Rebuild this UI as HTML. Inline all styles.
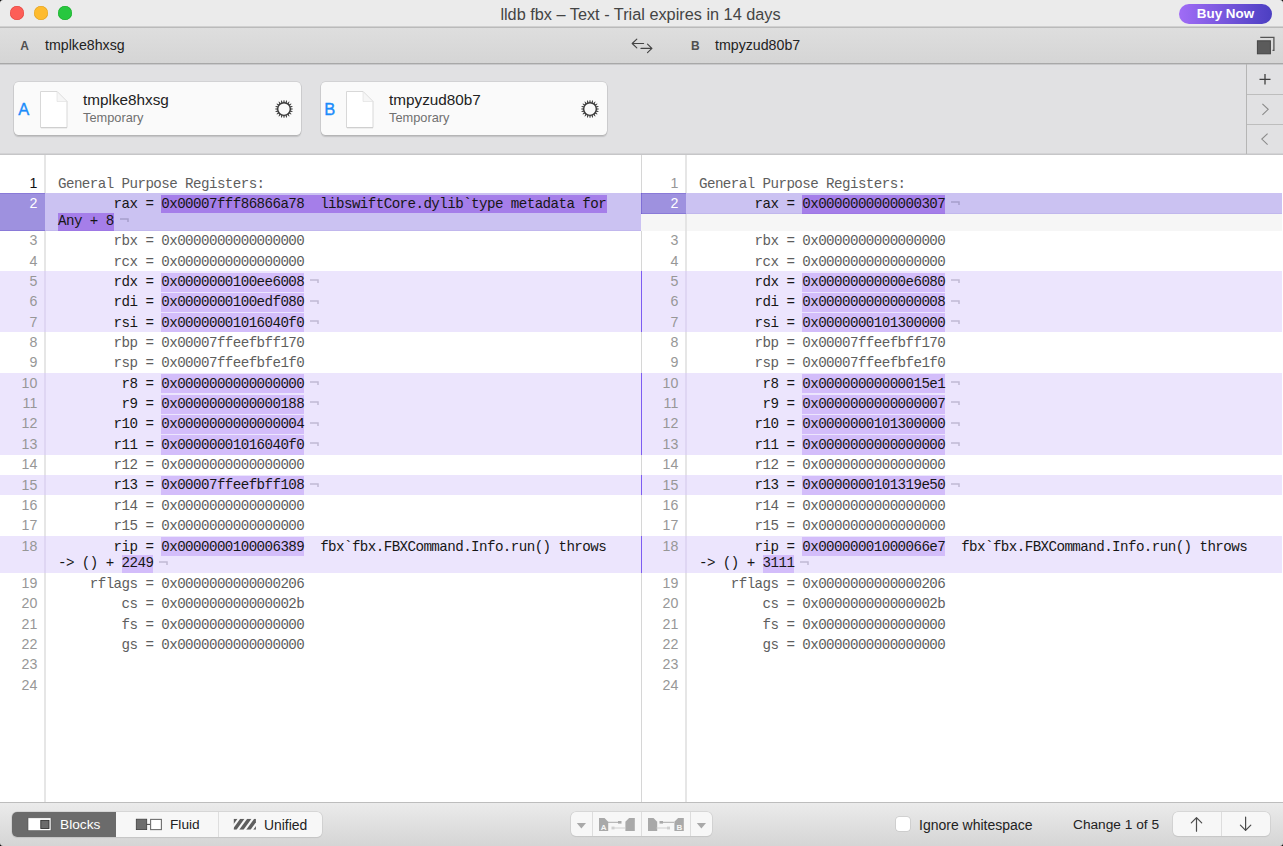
<!DOCTYPE html>
<html><head><meta charset="utf-8">
<style>
html,body{margin:0;padding:0;width:1283px;height:846px;overflow:hidden;background:#fff;font-family:"Liberation Sans",sans-serif;}
.a{position:absolute;}
.t{position:absolute;white-space:pre;font-family:"Liberation Mono",monospace;font-size:14.200px;letter-spacing:-0.570px;line-height:20px;height:20px;}
.n{position:absolute;text-align:right;font-family:"Liberation Sans",sans-serif;font-size:14.2px;line-height:20px;height:20px;}
.nl{color:#c8c8c8;}
.s{position:absolute;white-space:pre;line-height:20px;height:20px;}
</style></head><body>
<!-- title bar -->
<div class="a" style="left:0;top:0;width:1283px;height:26px;background:#ebebeb"></div><div class="a" style="left:0;top:26px;width:1283px;height:1px;background:#d0d0d0"></div><div class="a" style="left:0;top:27px;width:1283px;height:1px;background:#bababa"></div>
<div class="a" style="left:10px;top:6px;width:14px;height:14px;border-radius:50%;background:#fd5e57;box-shadow:inset 0 0 0 0.5px #e0443e"></div>
<div class="a" style="left:34px;top:6px;width:14px;height:14px;border-radius:50%;background:#febb2e;box-shadow:inset 0 0 0 0.5px #dea123"></div>
<div class="a" style="left:58px;top:6px;width:14px;height:14px;border-radius:50%;background:#27c73f;box-shadow:inset 0 0 0 0.5px #1aab29"></div>
<div class="s" style="left:-1px;width:1283px;text-align:center;top:3.6px;font-size:16.3px;color:#444">lldb fbx – Text - Trial expires in 14 days</div>
<div class="a" style="left:1179px;top:4px;width:93px;height:20px;border-radius:10px;background:linear-gradient(90deg,#a06cf6,#4c3fc2)"></div>
<div class="s" style="left:1179px;width:93px;text-align:center;top:4px;font-size:13.4px;font-weight:bold;color:#fff">Buy Now</div>
<!-- toolbar -->
<div class="a" style="left:0;top:28px;width:1283px;height:35px;background:linear-gradient(#dedede,#d5d5d5)"></div><div class="a" style="left:0;top:63px;width:1283px;height:1px;background:#a8a8a8"></div>
<div class="s" style="left:20.3px;top:35.5px;font-size:12px;font-weight:bold;color:#505050">A</div>
<div class="s" style="left:45px;top:35px;font-size:14.2px;color:#222">tmplke8hxsg</div>
<div class="s" style="left:691px;top:35.5px;font-size:12px;font-weight:bold;color:#505050">B</div>
<div class="s" style="left:715px;top:35px;font-size:14.2px;color:#222">tmpyzud80b7</div>
<!-- cards area -->
<div class="a" style="left:0;top:64px;width:1283px;height:89px;background:#e1e1e3"></div><div class="a" style="left:0;top:64px;width:1283px;height:1px;background:#c9c9cb"></div><div class="a" style="left:0;top:153px;width:1283px;height:1px;background:#d3d3d5"></div><div class="a" style="left:0;top:154px;width:1283px;height:1px;background:#c6c6c8"></div>
<div class="a" style="left:14px;top:82px;width:287px;height:52.5px;border-radius:4.5px;background:#fafafa;box-shadow:0 0 0.6px 0.6px rgba(0,0,0,.13),0 1.2px 1.2px rgba(0,0,0,.14)"></div>
<div class="a" style="left:321px;top:82px;width:286px;height:52.5px;border-radius:4.5px;background:#fafafa;box-shadow:0 0 0.6px 0.6px rgba(0,0,0,.13),0 1.2px 1.2px rgba(0,0,0,.14)"></div>
<div class="s" style="left:18.3px;top:99px;font-size:16.5px;color:#1b8cfb;-webkit-text-stroke:0.35px #1b8cfb">A</div>
<div class="s" style="left:324.3px;top:99px;font-size:16.5px;color:#1b8cfb;-webkit-text-stroke:0.35px #1b8cfb">B</div>
<div class="s" style="left:83px;top:90px;font-size:15.3px;color:#222">tmplke8hxsg</div>
<div class="s" style="left:83px;top:108px;font-size:12.8px;color:#707070">Temporary</div>
<div class="s" style="left:389px;top:90px;font-size:15.3px;color:#222">tmpyzud80b7</div>
<div class="s" style="left:389px;top:108px;font-size:12.8px;color:#707070">Temporary</div>
<!-- right buttons panel -->
<div class="a" style="left:1246px;top:64px;width:1px;height:90px;background:#b5b5b5"></div>
<div class="a" style="left:1247px;top:94px;width:36px;height:1px;background:#bdbdbd"></div>
<div class="a" style="left:1247px;top:124px;width:36px;height:1px;background:#bdbdbd"></div>
<!-- code area -->
<div class="a" style="left:0;top:155px;width:1283px;height:647px;background:#fff"></div>
<div class="a" style="left:44px;top:155px;width:2px;height:647px;background:#e6e6e6"></div>
<div class="a" style="left:641px;top:155px;width:1px;height:647px;background:#d6d6d6"></div>
<div class="a" style="left:685px;top:155px;width:2px;height:647px;background:#e6e6e6"></div>
<div class="a" style="left:0px;top:193.36px;width:45px;height:37.26px;background:#9e91df"></div>
<div class="a" style="left:45px;top:193.36px;width:596px;height:37.26px;background:#cbc2f2"></div>
<div class="a" style="left:0px;top:271.34px;width:641px;height:61.08px;background:#ece5fd"></div>
<div class="a" style="left:0px;top:373.14px;width:641px;height:81.44px;background:#ece5fd"></div>
<div class="a" style="left:0px;top:474.94px;width:641px;height:20.36px;background:#ece5fd"></div>
<div class="a" style="left:0px;top:536.02px;width:641px;height:37.26px;background:#ece5fd"></div>
<div class="a" style="left:161.35px;top:194.56px;width:445.20px;height:18.70px;background:#a57ee9"></div>
<div class="a" style="left:58.00px;top:212.76px;width:55.65px;height:17.86px;background:#a57ee9"></div>
<div class="a" style="left:161.35px;top:272.54px;width:143.10px;height:19.16px;background:#d3bdfa"></div>
<div class="a" style="left:161.35px;top:292.90px;width:143.10px;height:19.16px;background:#d3bdfa"></div>
<div class="a" style="left:161.35px;top:313.26px;width:143.10px;height:19.16px;background:#d3bdfa"></div>
<div class="a" style="left:161.35px;top:374.34px;width:143.10px;height:19.16px;background:#d3bdfa"></div>
<div class="a" style="left:161.35px;top:394.70px;width:143.10px;height:19.16px;background:#d3bdfa"></div>
<div class="a" style="left:161.35px;top:415.06px;width:143.10px;height:19.16px;background:#d3bdfa"></div>
<div class="a" style="left:161.35px;top:435.42px;width:143.10px;height:19.16px;background:#d3bdfa"></div>
<div class="a" style="left:161.35px;top:476.14px;width:143.10px;height:19.16px;background:#d3bdfa"></div>
<div class="a" style="left:161.35px;top:537.22px;width:143.10px;height:18.70px;background:#d3bdfa"></div>
<div class="a" style="left:121.60px;top:555.42px;width:31.80px;height:17.86px;background:#d3bdfa"></div>
<div class="t" style="left:58.0px;top:173.52px;color:#5e5e5e">General Purpose Registers:</div>
<div class="n" style="left:0px;width:37.3px;top:172.58px;color:#111111">1</div>
<div class="t" style="left:58.0px;top:193.88px;color:#161616">       rax = 0x00007fff86866a78  libswiftCore.dylib`type metadata for</div>
<svg class="a" style="left:119.50px;top:217.96px" width="10" height="5" viewBox="0 0 10 5"><path d="M0,0.9 H8 V4" fill="none" stroke="rgba(40,30,70,0.22)" stroke-width="1.5"/></svg>
<div class="t" style="left:58.0px;top:210.68px;color:#161616">Any + 8</div>
<div class="n" style="left:0px;width:37.3px;top:192.94px;color:#ffffff">2</div>
<div class="t" style="left:58.0px;top:231.14px;color:#5e5e5e">       rbx = 0x0000000000000000</div>
<div class="n" style="left:0px;width:37.3px;top:230.20px;color:#979797">3</div>
<div class="t" style="left:58.0px;top:251.50px;color:#5e5e5e">       rcx = 0x0000000000000000</div>
<div class="n" style="left:0px;width:37.3px;top:250.56px;color:#979797">4</div>
<svg class="a" style="left:310.30px;top:279.14px" width="10" height="5" viewBox="0 0 10 5"><path d="M0,0.9 H8 V4" fill="none" stroke="rgba(40,30,70,0.22)" stroke-width="1.5"/></svg>
<div class="t" style="left:58.0px;top:271.86px;color:#161616">       rdx = 0x0000000100ee6008</div>
<div class="n" style="left:0px;width:37.3px;top:270.92px;color:#979797">5</div>
<svg class="a" style="left:310.30px;top:299.50px" width="10" height="5" viewBox="0 0 10 5"><path d="M0,0.9 H8 V4" fill="none" stroke="rgba(40,30,70,0.22)" stroke-width="1.5"/></svg>
<div class="t" style="left:58.0px;top:292.22px;color:#161616">       rdi = 0x0000000100edf080</div>
<div class="n" style="left:0px;width:37.3px;top:291.28px;color:#979797">6</div>
<svg class="a" style="left:310.30px;top:319.86px" width="10" height="5" viewBox="0 0 10 5"><path d="M0,0.9 H8 V4" fill="none" stroke="rgba(40,30,70,0.22)" stroke-width="1.5"/></svg>
<div class="t" style="left:58.0px;top:312.58px;color:#161616">       rsi = 0x00000001016040f0</div>
<div class="n" style="left:0px;width:37.3px;top:311.64px;color:#979797">7</div>
<div class="t" style="left:58.0px;top:332.94px;color:#5e5e5e">       rbp = 0x00007ffeefbff170</div>
<div class="n" style="left:0px;width:37.3px;top:332.00px;color:#979797">8</div>
<div class="t" style="left:58.0px;top:353.30px;color:#5e5e5e">       rsp = 0x00007ffeefbfe1f0</div>
<div class="n" style="left:0px;width:37.3px;top:352.36px;color:#979797">9</div>
<svg class="a" style="left:310.30px;top:380.94px" width="10" height="5" viewBox="0 0 10 5"><path d="M0,0.9 H8 V4" fill="none" stroke="rgba(40,30,70,0.22)" stroke-width="1.5"/></svg>
<div class="t" style="left:58.0px;top:373.66px;color:#161616">        r8 = 0x0000000000000000</div>
<div class="n" style="left:0px;width:37.3px;top:372.72px;color:#979797">10</div>
<svg class="a" style="left:310.30px;top:401.30px" width="10" height="5" viewBox="0 0 10 5"><path d="M0,0.9 H8 V4" fill="none" stroke="rgba(40,30,70,0.22)" stroke-width="1.5"/></svg>
<div class="t" style="left:58.0px;top:394.02px;color:#161616">        r9 = 0x0000000000000188</div>
<div class="n" style="left:0px;width:37.3px;top:393.08px;color:#979797">11</div>
<svg class="a" style="left:310.30px;top:421.66px" width="10" height="5" viewBox="0 0 10 5"><path d="M0,0.9 H8 V4" fill="none" stroke="rgba(40,30,70,0.22)" stroke-width="1.5"/></svg>
<div class="t" style="left:58.0px;top:414.38px;color:#161616">       r10 = 0x0000000000000004</div>
<div class="n" style="left:0px;width:37.3px;top:413.44px;color:#979797">12</div>
<svg class="a" style="left:310.30px;top:442.02px" width="10" height="5" viewBox="0 0 10 5"><path d="M0,0.9 H8 V4" fill="none" stroke="rgba(40,30,70,0.22)" stroke-width="1.5"/></svg>
<div class="t" style="left:58.0px;top:434.74px;color:#161616">       r11 = 0x00000001016040f0</div>
<div class="n" style="left:0px;width:37.3px;top:433.80px;color:#979797">13</div>
<div class="t" style="left:58.0px;top:455.10px;color:#5e5e5e">       r12 = 0x0000000000000000</div>
<div class="n" style="left:0px;width:37.3px;top:454.16px;color:#979797">14</div>
<svg class="a" style="left:310.30px;top:482.74px" width="10" height="5" viewBox="0 0 10 5"><path d="M0,0.9 H8 V4" fill="none" stroke="rgba(40,30,70,0.22)" stroke-width="1.5"/></svg>
<div class="t" style="left:58.0px;top:475.46px;color:#161616">       r13 = 0x00007ffeefbff108</div>
<div class="n" style="left:0px;width:37.3px;top:474.52px;color:#979797">15</div>
<div class="t" style="left:58.0px;top:495.82px;color:#5e5e5e">       r14 = 0x0000000000000000</div>
<div class="n" style="left:0px;width:37.3px;top:494.88px;color:#979797">16</div>
<div class="t" style="left:58.0px;top:516.18px;color:#5e5e5e">       r15 = 0x0000000000000000</div>
<div class="n" style="left:0px;width:37.3px;top:515.24px;color:#979797">17</div>
<div class="t" style="left:58.0px;top:536.54px;color:#161616">       rip = 0x0000000100006389  fbx`fbx.FBXCommand.Info.run() throws</div>
<svg class="a" style="left:159.25px;top:560.62px" width="10" height="5" viewBox="0 0 10 5"><path d="M0,0.9 H8 V4" fill="none" stroke="rgba(40,30,70,0.22)" stroke-width="1.5"/></svg>
<div class="t" style="left:58.0px;top:553.34px;color:#161616">-&gt; () + 2249</div>
<div class="n" style="left:0px;width:37.3px;top:535.60px;color:#979797">18</div>
<div class="t" style="left:58.0px;top:573.80px;color:#5e5e5e">    rflags = 0x0000000000000206</div>
<div class="n" style="left:0px;width:37.3px;top:572.86px;color:#979797">19</div>
<div class="t" style="left:58.0px;top:594.16px;color:#5e5e5e">        cs = 0x000000000000002b</div>
<div class="n" style="left:0px;width:37.3px;top:593.22px;color:#979797">20</div>
<div class="t" style="left:58.0px;top:614.52px;color:#5e5e5e">        fs = 0x0000000000000000</div>
<div class="n" style="left:0px;width:37.3px;top:613.58px;color:#979797">21</div>
<div class="t" style="left:58.0px;top:634.88px;color:#5e5e5e">        gs = 0x0000000000000000</div>
<div class="n" style="left:0px;width:37.3px;top:633.94px;color:#979797">22</div>
<div class="t" style="left:58.0px;top:655.24px;color:#5e5e5e"></div>
<div class="n" style="left:0px;width:37.3px;top:654.30px;color:#979797">23</div>
<div class="t" style="left:58.0px;top:675.60px;color:#5e5e5e"></div>
<div class="n" style="left:0px;width:37.3px;top:674.66px;color:#979797">24</div>
<div class="a" style="left:641px;top:193.36px;width:45px;height:20.36px;background:#9e91df"></div>
<div class="a" style="left:686px;top:193.36px;width:596px;height:20.36px;background:#cbc2f2"></div>
<div class="a" style="left:641px;top:213.72px;width:641px;height:16.90px;background:#f6f6f6"></div>
<div class="a" style="left:641px;top:271.34px;width:641px;height:61.08px;background:#ece5fd"></div>
<div class="a" style="left:641px;top:373.14px;width:641px;height:81.44px;background:#ece5fd"></div>
<div class="a" style="left:641px;top:474.94px;width:641px;height:20.36px;background:#ece5fd"></div>
<div class="a" style="left:641px;top:536.02px;width:641px;height:37.26px;background:#ece5fd"></div>
<div class="a" style="left:802.35px;top:194.56px;width:143.10px;height:19.16px;background:#a57ee9"></div>
<div class="a" style="left:802.35px;top:272.54px;width:143.10px;height:19.16px;background:#d3bdfa"></div>
<div class="a" style="left:802.35px;top:292.90px;width:143.10px;height:19.16px;background:#d3bdfa"></div>
<div class="a" style="left:802.35px;top:313.26px;width:143.10px;height:19.16px;background:#d3bdfa"></div>
<div class="a" style="left:802.35px;top:374.34px;width:143.10px;height:19.16px;background:#d3bdfa"></div>
<div class="a" style="left:802.35px;top:394.70px;width:143.10px;height:19.16px;background:#d3bdfa"></div>
<div class="a" style="left:802.35px;top:415.06px;width:143.10px;height:19.16px;background:#d3bdfa"></div>
<div class="a" style="left:802.35px;top:435.42px;width:143.10px;height:19.16px;background:#d3bdfa"></div>
<div class="a" style="left:802.35px;top:476.14px;width:143.10px;height:19.16px;background:#d3bdfa"></div>
<div class="a" style="left:802.35px;top:537.22px;width:143.10px;height:18.70px;background:#d3bdfa"></div>
<div class="a" style="left:762.60px;top:555.42px;width:31.80px;height:17.86px;background:#d3bdfa"></div>
<div class="t" style="left:699.0px;top:173.52px;color:#5e5e5e">General Purpose Registers:</div>
<div class="n" style="left:641px;width:37.3px;top:172.58px;color:#979797">1</div>
<svg class="a" style="left:951.30px;top:201.16px" width="10" height="5" viewBox="0 0 10 5"><path d="M0,0.9 H8 V4" fill="none" stroke="rgba(40,30,70,0.22)" stroke-width="1.5"/></svg>
<div class="t" style="left:699.0px;top:193.88px;color:#161616">       rax = 0x0000000000000307</div>
<div class="n" style="left:641px;width:37.3px;top:192.94px;color:#ffffff">2</div>
<div class="t" style="left:699.0px;top:231.14px;color:#5e5e5e">       rbx = 0x0000000000000000</div>
<div class="n" style="left:641px;width:37.3px;top:230.20px;color:#979797">3</div>
<div class="t" style="left:699.0px;top:251.50px;color:#5e5e5e">       rcx = 0x0000000000000000</div>
<div class="n" style="left:641px;width:37.3px;top:250.56px;color:#979797">4</div>
<svg class="a" style="left:951.30px;top:279.14px" width="10" height="5" viewBox="0 0 10 5"><path d="M0,0.9 H8 V4" fill="none" stroke="rgba(40,30,70,0.22)" stroke-width="1.5"/></svg>
<div class="t" style="left:699.0px;top:271.86px;color:#161616">       rdx = 0x00000000000e6080</div>
<div class="n" style="left:641px;width:37.3px;top:270.92px;color:#979797">5</div>
<svg class="a" style="left:951.30px;top:299.50px" width="10" height="5" viewBox="0 0 10 5"><path d="M0,0.9 H8 V4" fill="none" stroke="rgba(40,30,70,0.22)" stroke-width="1.5"/></svg>
<div class="t" style="left:699.0px;top:292.22px;color:#161616">       rdi = 0x0000000000000008</div>
<div class="n" style="left:641px;width:37.3px;top:291.28px;color:#979797">6</div>
<svg class="a" style="left:951.30px;top:319.86px" width="10" height="5" viewBox="0 0 10 5"><path d="M0,0.9 H8 V4" fill="none" stroke="rgba(40,30,70,0.22)" stroke-width="1.5"/></svg>
<div class="t" style="left:699.0px;top:312.58px;color:#161616">       rsi = 0x0000000101300000</div>
<div class="n" style="left:641px;width:37.3px;top:311.64px;color:#979797">7</div>
<div class="t" style="left:699.0px;top:332.94px;color:#5e5e5e">       rbp = 0x00007ffeefbff170</div>
<div class="n" style="left:641px;width:37.3px;top:332.00px;color:#979797">8</div>
<div class="t" style="left:699.0px;top:353.30px;color:#5e5e5e">       rsp = 0x00007ffeefbfe1f0</div>
<div class="n" style="left:641px;width:37.3px;top:352.36px;color:#979797">9</div>
<svg class="a" style="left:951.30px;top:380.94px" width="10" height="5" viewBox="0 0 10 5"><path d="M0,0.9 H8 V4" fill="none" stroke="rgba(40,30,70,0.22)" stroke-width="1.5"/></svg>
<div class="t" style="left:699.0px;top:373.66px;color:#161616">        r8 = 0x00000000000015e1</div>
<div class="n" style="left:641px;width:37.3px;top:372.72px;color:#979797">10</div>
<svg class="a" style="left:951.30px;top:401.30px" width="10" height="5" viewBox="0 0 10 5"><path d="M0,0.9 H8 V4" fill="none" stroke="rgba(40,30,70,0.22)" stroke-width="1.5"/></svg>
<div class="t" style="left:699.0px;top:394.02px;color:#161616">        r9 = 0x0000000000000007</div>
<div class="n" style="left:641px;width:37.3px;top:393.08px;color:#979797">11</div>
<svg class="a" style="left:951.30px;top:421.66px" width="10" height="5" viewBox="0 0 10 5"><path d="M0,0.9 H8 V4" fill="none" stroke="rgba(40,30,70,0.22)" stroke-width="1.5"/></svg>
<div class="t" style="left:699.0px;top:414.38px;color:#161616">       r10 = 0x0000000101300000</div>
<div class="n" style="left:641px;width:37.3px;top:413.44px;color:#979797">12</div>
<svg class="a" style="left:951.30px;top:442.02px" width="10" height="5" viewBox="0 0 10 5"><path d="M0,0.9 H8 V4" fill="none" stroke="rgba(40,30,70,0.22)" stroke-width="1.5"/></svg>
<div class="t" style="left:699.0px;top:434.74px;color:#161616">       r11 = 0x0000000000000000</div>
<div class="n" style="left:641px;width:37.3px;top:433.80px;color:#979797">13</div>
<div class="t" style="left:699.0px;top:455.10px;color:#5e5e5e">       r12 = 0x0000000000000000</div>
<div class="n" style="left:641px;width:37.3px;top:454.16px;color:#979797">14</div>
<svg class="a" style="left:951.30px;top:482.74px" width="10" height="5" viewBox="0 0 10 5"><path d="M0,0.9 H8 V4" fill="none" stroke="rgba(40,30,70,0.22)" stroke-width="1.5"/></svg>
<div class="t" style="left:699.0px;top:475.46px;color:#161616">       r13 = 0x0000000101319e50</div>
<div class="n" style="left:641px;width:37.3px;top:474.52px;color:#979797">15</div>
<div class="t" style="left:699.0px;top:495.82px;color:#5e5e5e">       r14 = 0x0000000000000000</div>
<div class="n" style="left:641px;width:37.3px;top:494.88px;color:#979797">16</div>
<div class="t" style="left:699.0px;top:516.18px;color:#5e5e5e">       r15 = 0x0000000000000000</div>
<div class="n" style="left:641px;width:37.3px;top:515.24px;color:#979797">17</div>
<div class="t" style="left:699.0px;top:536.54px;color:#161616">       rip = 0x00000001000066e7  fbx`fbx.FBXCommand.Info.run() throws</div>
<svg class="a" style="left:800.25px;top:560.62px" width="10" height="5" viewBox="0 0 10 5"><path d="M0,0.9 H8 V4" fill="none" stroke="rgba(40,30,70,0.22)" stroke-width="1.5"/></svg>
<div class="t" style="left:699.0px;top:553.34px;color:#161616">-&gt; () + 3111</div>
<div class="n" style="left:641px;width:37.3px;top:535.60px;color:#979797">18</div>
<div class="t" style="left:699.0px;top:573.80px;color:#5e5e5e">    rflags = 0x0000000000000206</div>
<div class="n" style="left:641px;width:37.3px;top:572.86px;color:#979797">19</div>
<div class="t" style="left:699.0px;top:594.16px;color:#5e5e5e">        cs = 0x000000000000002b</div>
<div class="n" style="left:641px;width:37.3px;top:593.22px;color:#979797">20</div>
<div class="t" style="left:699.0px;top:614.52px;color:#5e5e5e">        fs = 0x0000000000000000</div>
<div class="n" style="left:641px;width:37.3px;top:613.58px;color:#979797">21</div>
<div class="t" style="left:699.0px;top:634.88px;color:#5e5e5e">        gs = 0x0000000000000000</div>
<div class="n" style="left:641px;width:37.3px;top:633.94px;color:#979797">22</div>
<div class="t" style="left:699.0px;top:655.24px;color:#5e5e5e"></div>
<div class="n" style="left:641px;width:37.3px;top:654.30px;color:#979797">23</div>
<div class="t" style="left:699.0px;top:675.60px;color:#5e5e5e"></div>
<div class="n" style="left:641px;width:37.3px;top:674.66px;color:#979797">24</div>
<div class="a" style="left:641px;top:271.34px;width:1px;height:61.08px;background:#7d5cf2"></div>
<div class="a" style="left:641px;top:373.14px;width:1px;height:81.44px;background:#7d5cf2"></div>
<div class="a" style="left:641px;top:474.94px;width:1px;height:20.36px;background:#7d5cf2"></div>
<div class="a" style="left:641px;top:536.02px;width:1px;height:37.26px;background:#7d5cf2"></div>
<div class="a" style="left:44px;top:271.34px;width:2px;height:61.08px;background:rgba(60,30,120,0.07)"></div>
<div class="a" style="left:685px;top:271.34px;width:2px;height:61.08px;background:rgba(60,30,120,0.07)"></div>
<div class="a" style="left:44px;top:373.14px;width:2px;height:81.44px;background:rgba(60,30,120,0.07)"></div>
<div class="a" style="left:685px;top:373.14px;width:2px;height:81.44px;background:rgba(60,30,120,0.07)"></div>
<div class="a" style="left:44px;top:474.94px;width:2px;height:20.36px;background:rgba(60,30,120,0.07)"></div>
<div class="a" style="left:685px;top:474.94px;width:2px;height:20.36px;background:rgba(60,30,120,0.07)"></div>
<div class="a" style="left:44px;top:536.02px;width:2px;height:37.26px;background:rgba(60,30,120,0.07)"></div>
<div class="a" style="left:685px;top:536.02px;width:2px;height:37.26px;background:rgba(60,30,120,0.07)"></div>
<div class="a" style="left:641px;top:193.36px;width:1px;height:20.36px;background:#7f6fd6"></div>
<div class="a" style="left:685px;top:213.72px;width:2px;height:16.90px;background:rgba(0,0,0,0.07)"></div>
<div class="a" style="left:0px;top:193.36px;width:45px;height:1px;background:rgba(70,40,190,0.22)"></div>
<div class="a" style="left:0px;top:229.62px;width:45px;height:1px;background:rgba(70,40,190,0.22)"></div>
<div class="a" style="left:641px;top:193.36px;width:45px;height:1px;background:rgba(70,40,190,0.22)"></div>
<div class="a" style="left:641px;top:212.72px;width:45px;height:1px;background:rgba(70,40,190,0.22)"></div>
<div class="a" style="left:686px;top:212.72px;width:596px;height:1px;background:rgba(70,40,190,0.07)"></div>
<div class="a" style="left:45px;top:229.62px;width:596px;height:1px;background:rgba(70,40,190,0.07)"></div>
<!-- bottom bar -->
<div class="a" style="left:0;top:803px;width:1283px;height:43px;background:linear-gradient(#ebebeb,#d5d5d5)"></div><div class="a" style="left:0;top:802px;width:1283px;height:1px;background:#bdbdbd"></div>
<div class="a" style="left:12px;top:812px;width:310px;height:25px;border-radius:5px;background:#f7f7f7;box-shadow:0 0 0 0.6px #c8c8c8,0 0.6px 1px rgba(0,0,0,.10)"></div>
<div class="a" style="left:12px;top:812px;width:104px;height:25px;border-radius:5px 0 0 5px;background:#6b6b6b"></div>
<div class="a" style="left:218px;top:812px;width:1px;height:25px;background:#dedede"></div>
<div class="s" style="left:60px;top:815px;font-size:13.7px;color:#fff">Blocks</div>
<div class="s" style="left:170px;top:815px;font-size:13.7px;color:#222">Fluid</div>
<div class="s" style="left:264px;top:815px;font-size:13.9px;color:#222">Unified</div>
<div class="a" style="left:571px;top:812px;width:141px;height:24px;border-radius:5px;background:#f7f7f7;box-shadow:0 0 0 0.6px #cacaca,0 0.6px 1px rgba(0,0,0,.10)"></div>
<div class="a" style="left:592px;top:812px;width:1px;height:24px;background:#dddddd"></div>
<div class="a" style="left:641px;top:812px;width:1px;height:24px;background:#dddddd"></div>
<div class="a" style="left:690px;top:812px;width:1px;height:24px;background:#dddddd"></div>
<div class="a" style="left:896px;top:817px;width:14px;height:14px;border-radius:3px;background:#fff;box-shadow:0 0 0 0.5px #bdbdbd"></div>
<div class="s" style="left:919px;top:815px;font-size:14px;color:#222">Ignore whitespace</div>
<div class="s" style="left:1073px;top:815px;font-size:13.7px;color:#222">Change 1 of 5</div>
<div class="a" style="left:1173px;top:812px;width:97px;height:24px;border-radius:5px;background:#f7f7f7;box-shadow:0 0 0 0.6px #cacaca,0 0.6px 1px rgba(0,0,0,.10)"></div>
<div class="a" style="left:1221px;top:812px;width:1px;height:24px;background:#dddddd"></div>
<svg class="a" style="left:38px;top:89px" width="32" height="41" viewBox="-2 -2 32 41"><path d="M0.5,0.5 H17 L27,10.5 V36.5 H0.5 Z" fill="#ffffff" stroke="#d8d8d8" stroke-width="1"/><path d="M17,0.5 V10.5 H27 Z" fill="#f6f6f6" stroke="#dedede" stroke-width="0.6"/><path d="M1,36.8 H27" stroke="#c8c8c8" stroke-width="0.8"/></svg>
<svg class="a" style="left:344px;top:89px" width="32" height="41" viewBox="-2 -2 32 41"><path d="M0.5,0.5 H17 L27,10.5 V36.5 H0.5 Z" fill="#ffffff" stroke="#d8d8d8" stroke-width="1"/><path d="M17,0.5 V10.5 H27 Z" fill="#f6f6f6" stroke="#dedede" stroke-width="0.6"/><path d="M1,36.8 H27" stroke="#c8c8c8" stroke-width="0.8"/></svg>
<svg class="a" style="left:273.9px;top:99.1px" width="20" height="20" viewBox="-10 -10 20 20"><circle r="6.35" fill="none" stroke="#3b3b3b" stroke-width="1.45"/><path d="M-0.8,-6.6 L-0.25,-9 L0.25,-9 L0.8,-6.6 Z" transform="rotate(0)" fill="#3b3b3b"/><path d="M-0.8,-6.6 L-0.25,-9 L0.25,-9 L0.8,-6.6 Z" transform="rotate(18)" fill="#3b3b3b"/><path d="M-0.8,-6.6 L-0.25,-9 L0.25,-9 L0.8,-6.6 Z" transform="rotate(36)" fill="#3b3b3b"/><path d="M-0.8,-6.6 L-0.25,-9 L0.25,-9 L0.8,-6.6 Z" transform="rotate(54)" fill="#3b3b3b"/><path d="M-0.8,-6.6 L-0.25,-9 L0.25,-9 L0.8,-6.6 Z" transform="rotate(72)" fill="#3b3b3b"/><path d="M-0.8,-6.6 L-0.25,-9 L0.25,-9 L0.8,-6.6 Z" transform="rotate(90)" fill="#3b3b3b"/><path d="M-0.8,-6.6 L-0.25,-9 L0.25,-9 L0.8,-6.6 Z" transform="rotate(108)" fill="#3b3b3b"/><path d="M-0.8,-6.6 L-0.25,-9 L0.25,-9 L0.8,-6.6 Z" transform="rotate(126)" fill="#3b3b3b"/><path d="M-0.8,-6.6 L-0.25,-9 L0.25,-9 L0.8,-6.6 Z" transform="rotate(144)" fill="#3b3b3b"/><path d="M-0.8,-6.6 L-0.25,-9 L0.25,-9 L0.8,-6.6 Z" transform="rotate(162)" fill="#3b3b3b"/><path d="M-0.8,-6.6 L-0.25,-9 L0.25,-9 L0.8,-6.6 Z" transform="rotate(180)" fill="#3b3b3b"/><path d="M-0.8,-6.6 L-0.25,-9 L0.25,-9 L0.8,-6.6 Z" transform="rotate(198)" fill="#3b3b3b"/><path d="M-0.8,-6.6 L-0.25,-9 L0.25,-9 L0.8,-6.6 Z" transform="rotate(216)" fill="#3b3b3b"/><path d="M-0.8,-6.6 L-0.25,-9 L0.25,-9 L0.8,-6.6 Z" transform="rotate(234)" fill="#3b3b3b"/><path d="M-0.8,-6.6 L-0.25,-9 L0.25,-9 L0.8,-6.6 Z" transform="rotate(252)" fill="#3b3b3b"/><path d="M-0.8,-6.6 L-0.25,-9 L0.25,-9 L0.8,-6.6 Z" transform="rotate(270)" fill="#3b3b3b"/><path d="M-0.8,-6.6 L-0.25,-9 L0.25,-9 L0.8,-6.6 Z" transform="rotate(288)" fill="#3b3b3b"/><path d="M-0.8,-6.6 L-0.25,-9 L0.25,-9 L0.8,-6.6 Z" transform="rotate(306)" fill="#3b3b3b"/><path d="M-0.8,-6.6 L-0.25,-9 L0.25,-9 L0.8,-6.6 Z" transform="rotate(324)" fill="#3b3b3b"/><path d="M-0.8,-6.6 L-0.25,-9 L0.25,-9 L0.8,-6.6 Z" transform="rotate(342)" fill="#3b3b3b"/></svg>
<svg class="a" style="left:579.9px;top:99.1px" width="20" height="20" viewBox="-10 -10 20 20"><circle r="6.35" fill="none" stroke="#3b3b3b" stroke-width="1.45"/><path d="M-0.8,-6.6 L-0.25,-9 L0.25,-9 L0.8,-6.6 Z" transform="rotate(0)" fill="#3b3b3b"/><path d="M-0.8,-6.6 L-0.25,-9 L0.25,-9 L0.8,-6.6 Z" transform="rotate(18)" fill="#3b3b3b"/><path d="M-0.8,-6.6 L-0.25,-9 L0.25,-9 L0.8,-6.6 Z" transform="rotate(36)" fill="#3b3b3b"/><path d="M-0.8,-6.6 L-0.25,-9 L0.25,-9 L0.8,-6.6 Z" transform="rotate(54)" fill="#3b3b3b"/><path d="M-0.8,-6.6 L-0.25,-9 L0.25,-9 L0.8,-6.6 Z" transform="rotate(72)" fill="#3b3b3b"/><path d="M-0.8,-6.6 L-0.25,-9 L0.25,-9 L0.8,-6.6 Z" transform="rotate(90)" fill="#3b3b3b"/><path d="M-0.8,-6.6 L-0.25,-9 L0.25,-9 L0.8,-6.6 Z" transform="rotate(108)" fill="#3b3b3b"/><path d="M-0.8,-6.6 L-0.25,-9 L0.25,-9 L0.8,-6.6 Z" transform="rotate(126)" fill="#3b3b3b"/><path d="M-0.8,-6.6 L-0.25,-9 L0.25,-9 L0.8,-6.6 Z" transform="rotate(144)" fill="#3b3b3b"/><path d="M-0.8,-6.6 L-0.25,-9 L0.25,-9 L0.8,-6.6 Z" transform="rotate(162)" fill="#3b3b3b"/><path d="M-0.8,-6.6 L-0.25,-9 L0.25,-9 L0.8,-6.6 Z" transform="rotate(180)" fill="#3b3b3b"/><path d="M-0.8,-6.6 L-0.25,-9 L0.25,-9 L0.8,-6.6 Z" transform="rotate(198)" fill="#3b3b3b"/><path d="M-0.8,-6.6 L-0.25,-9 L0.25,-9 L0.8,-6.6 Z" transform="rotate(216)" fill="#3b3b3b"/><path d="M-0.8,-6.6 L-0.25,-9 L0.25,-9 L0.8,-6.6 Z" transform="rotate(234)" fill="#3b3b3b"/><path d="M-0.8,-6.6 L-0.25,-9 L0.25,-9 L0.8,-6.6 Z" transform="rotate(252)" fill="#3b3b3b"/><path d="M-0.8,-6.6 L-0.25,-9 L0.25,-9 L0.8,-6.6 Z" transform="rotate(270)" fill="#3b3b3b"/><path d="M-0.8,-6.6 L-0.25,-9 L0.25,-9 L0.8,-6.6 Z" transform="rotate(288)" fill="#3b3b3b"/><path d="M-0.8,-6.6 L-0.25,-9 L0.25,-9 L0.8,-6.6 Z" transform="rotate(306)" fill="#3b3b3b"/><path d="M-0.8,-6.6 L-0.25,-9 L0.25,-9 L0.8,-6.6 Z" transform="rotate(324)" fill="#3b3b3b"/><path d="M-0.8,-6.6 L-0.25,-9 L0.25,-9 L0.8,-6.6 Z" transform="rotate(342)" fill="#3b3b3b"/></svg>
<svg class="a" style="left:625px;top:33px" width="35" height="25" viewBox="625 33 35 25" fill="none" stroke="#444" stroke-width="1.15" stroke-linecap="round" stroke-linejoin="round"><path d="M636.8,39.2 L632.2,43.5 L636.8,47.8 M632.2,43.5 H643.6"/><path d="M647.5,44.1 L651.9,48.4 L647.5,52.7 M641,48.4 H651.9"/></svg>
<svg class="a" style="left:1250px;top:30px" width="30" height="30" viewBox="1250 30 30 30"><path d="M1260.9,37.9 V37.3 H1273.9 V50.3 H1272.5" fill="none" stroke="#555" stroke-width="1.3"/><rect x="1257.4" y="40.8" width="13" height="13" fill="#5b5b5b" stroke="#444" stroke-width="1"/></svg>
<svg class="a" style="left:1247px;top:64px" width="36" height="90" viewBox="1247 64 36 90" fill="none" stroke-linecap="butt"><path d="M1259.5,79.3 H1270.5 M1265,74 V84.6" stroke="#3f3f3f" stroke-width="1.3"/><path d="M1262.4,103.8 L1268.2,109.3 L1262.4,114.8" stroke="#8a8a8a" stroke-width="1.1"/><path d="M1267.6,133.6 L1261.8,139.1 L1267.6,144.6" stroke="#8a8a8a" stroke-width="1.1"/></svg>
<svg class="a" style="left:20px;top:810px" width="40" height="30" viewBox="20 810 40 30"><rect x="28" y="817.8" width="23" height="12.9" fill="#fff" stroke="#555" stroke-width="0.6"/><rect x="40.8" y="820.4" width="8.2" height="8.1" fill="#6b6b6b" stroke="#333" stroke-width="0.9"/></svg>
<svg class="a" style="left:130px;top:810px" width="40" height="30" viewBox="130 810 40 30"><rect x="136.3" y="819.2" width="10.4" height="10.4" fill="#6e6e6e" stroke="#3e3e3e" stroke-width="0.8"/><path d="M146.7,824.4 H150.4" stroke="#444" stroke-width="1"/><rect x="150.6" y="819.4" width="10.8" height="10.2" fill="#fff" stroke="#6e6e6e" stroke-width="1.1"/></svg>
<svg class="a" style="left:228px;top:810px" width="34" height="30" viewBox="228 810 34 30"><defs><clipPath id="uc"><rect x="233.8" y="818.8" width="22.1" height="11"/></clipPath></defs><g clip-path="url(#uc)" fill="#5e5e5e"><path d="M233.2,818.8 H237.5 L229.5,829.8 H225.2 Z"/><path d="M240.2,818.8 H244.5 L236.5,829.8 H232.2 Z"/><path d="M247.2,818.8 H251.5 L243.5,829.8 H239.2 Z"/><path d="M254.2,818.8 H258.5 L250.5,829.8 H246.2 Z"/><path d="M261.2,818.8 H265.5 L257.5,829.8 H253.2 Z"/></g></svg>
<svg class="a" style="left:571px;top:812px" width="141" height="25" viewBox="571 812 141 25" fill="#a9a9a9"><path d="M576.8,823 H586 L581.4,828.5 Z"/><path d="M696.8,823 H706 L701.4,828.5 Z"/><path d="M599,818 H604.5 L608.2,821.7 V830.9 H599 Z"/><text x="603.6" y="830" font-family="Liberation Sans" font-weight="bold" font-size="8" fill="#f6f6f6" text-anchor="middle">A</text><path d="M607.5,822.3 H618.5" stroke="#a9a9a9" stroke-width="1"/><rect x="618" y="821" width="3.5" height="2.6"/><path d="M612,828 H625" stroke="#cfcfcf" stroke-width="1"/><rect x="611.5" y="826.6" width="3" height="2.8" fill="#cfcfcf"/><path d="M629.1,818 H634.8 V830.9 H625.4 V821.7 Z"/><path d="M648,818 H653.5 L657.2,821.7 V830.9 H648 Z"/><path d="M656.5,828 H669" stroke="#cfcfcf" stroke-width="1"/><rect x="667" y="826.6" width="3" height="2.8" fill="#cfcfcf"/><path d="M661,822.3 H674" stroke="#a9a9a9" stroke-width="1"/><rect x="659.5" y="821" width="3.5" height="2.6"/><path d="M678.1,818 H683.8 V830.9 H674.4 V821.7 Z"/><text x="679.3" y="830" font-family="Liberation Sans" font-weight="bold" font-size="8" fill="#f6f6f6" text-anchor="middle">B</text></svg>
<svg class="a" style="left:1180px;top:810px" width="80" height="30" viewBox="1180 810 80 30" fill="none" stroke="#4a4a4a" stroke-width="1.2" stroke-linecap="round" stroke-linejoin="round"><path d="M1196.5,817.6 V831.2 M1191.3,822.8 L1196.5,817.6 L1201.7,822.8"/><path d="M1245.6,817 V830.4 M1240.4,825.2 L1245.6,830.4 L1250.8,825.2"/></svg>
<svg class="a" style="left:0;top:0" width="4" height="4" viewBox="0 0 4 4"><path d="M0,0 H3 A3,3 0 0 0 0,3 Z" fill="#000"/></svg>
<svg class="a" style="left:1279px;top:0" width="4" height="4" viewBox="0 0 4 4"><path d="M4,0 H1 A3,3 0 0 1 4,3 Z" fill="#000"/></svg>
<svg class="a" style="left:0;top:842px" width="4" height="4" viewBox="0 0 4 4"><path d="M0,4 H3 A3,3 0 0 1 0,1 Z" fill="#000"/></svg>
<svg class="a" style="left:1279px;top:842px" width="4" height="4" viewBox="0 0 4 4"><path d="M4,4 H1 A3,3 0 0 0 4,1 Z" fill="#000"/></svg>
</body></html>
